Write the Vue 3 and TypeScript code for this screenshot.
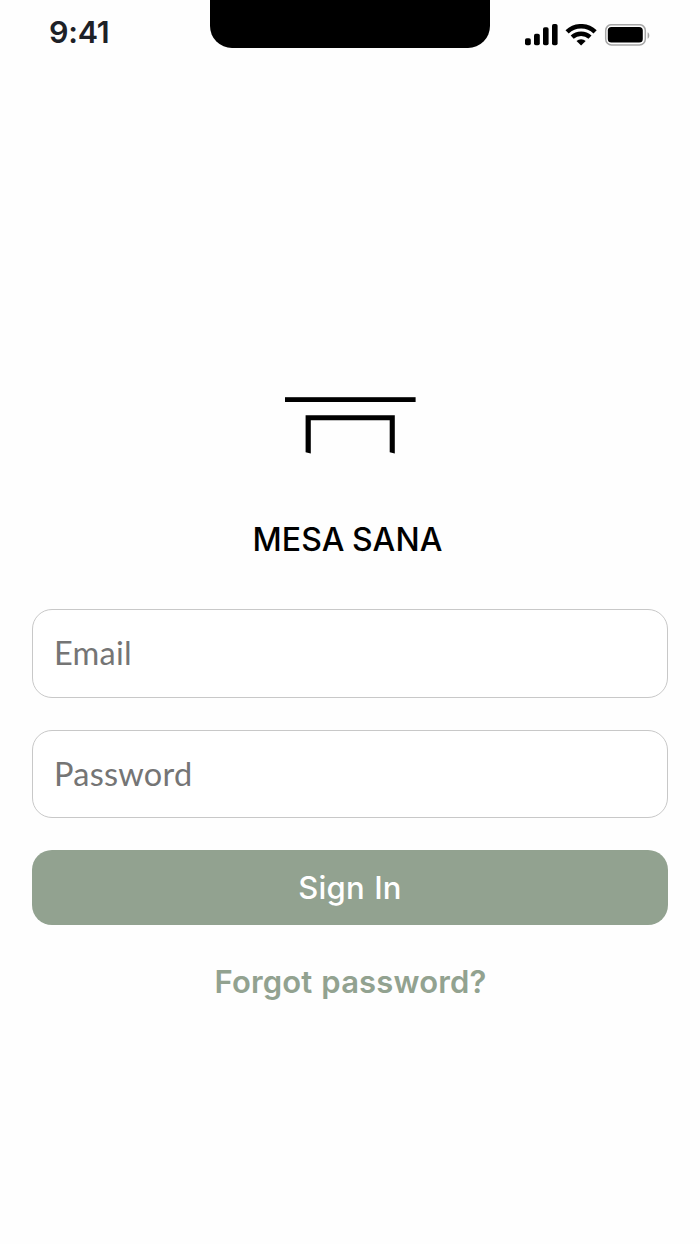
<script setup lang="ts">
import { ref } from 'vue'

const email = ref<string>('')
const password = ref<string>('')
</script>

<template>
  <div class="screen">
    <header class="status-bar">
      <time class="clock">9:41</time>
      <div class="notch"></div>
      <svg class="indicators" width="126" height="24" viewBox="0 0 126 24" aria-hidden="true">
        <rect x="0" y="14.3" width="5.8" height="7" rx="1.8" />
        <rect x="9" y="9.8" width="5.8" height="11.5" rx="1.8" />
        <rect x="18" y="3.3" width="5.6" height="18" rx="1.8" />
        <rect x="27" y="0" width="5.6" height="21.3" rx="1.8" />
        <g fill="none" stroke="#000">
          <path d="M42.1 7.9a20.2 20.2 0 0 1 28 0" stroke-width="4.6" />
          <path d="M47.2 13.2a13 13 0 0 1 17.8 0" stroke-width="4.4" />
        </g>
        <path d="M51.5 17a6.6 6.6 0 0 1 9.2 0L56.1 21.6z" />
        <rect x="80.7" y="0.7" width="39.6" height="20.2" rx="5.8" fill="none" stroke="#a6a6a6" stroke-width="1.5" />
        <rect x="82.8" y="3" width="35" height="15.6" rx="3.6" />
        <path d="M122.6 8.2c2.3 1 2.3 5.5 0 6.5z" fill="#a6a6a6" />
      </svg>
    </header>

    <main class="login">
      <svg class="logo" width="132" height="58" viewBox="0 0 132 58" aria-hidden="true">
        <rect x="1" y="1.2" width="130.6" height="4.8" />
        <path d="M21.6 19.2H110.8V57.5L105.7 56.2V24.2H26.8V57.5L21.6 56.2z" />
      </svg>
      <h1 class="brand">MESA SANA</h1>
      <form class="form" @submit.prevent>
        <input v-model="email" class="field" type="email" placeholder="Email" />
        <input v-model="password" class="field" type="password" placeholder="Password" />
        <button class="submit" type="submit"><span>Sign In</span></button>
      </form>
      <a class="forgot">Forgot password?</a>
    </main>
  </div>
</template>

<style>
body {
  margin: 0;
  background: #fefefe;
}
</style>

<style scoped>
.screen {
  width: 700px;
  height: 1244px;
  overflow: hidden;
  background: #fefefe;
  font-family: Inter, "Liberation Sans", sans-serif;
}

.status-bar {
  display: grid;
  grid-template-columns: 210px 280px 210px;
  grid-template-rows: 48px;
  height: 48px;
}

.clock {
  padding: 13px 0 0 49px;
  font-size: 30.5px;
  line-height: 38px;
  font-weight: 600;
  letter-spacing: -0.3px;
  color: #1d2127;
}

.notch {
  background: #000;
  border-radius: 0 0 22px 22px;
}

.indicators {
  margin: 24px 0 0 35px;
}

.login {
  display: flex;
  flex-direction: column;
  align-items: center;
  padding: 348px 32px 0;
}

.logo {
  display: block;
}

.brand {
  margin: 66px 0 0;
  padding-right: 5px;
  font-size: 32px;
  line-height: 40px;
  font-weight: 550;
  letter-spacing: 0.15px;
  word-spacing: -1.5px;
  color: #000;
}

.form {
  display: flex;
  flex-direction: column;
  width: 100%;
  margin-top: 49px;
}

.field {
  box-sizing: border-box;
  width: 100%;
  height: 88.5px;
  margin: 0 0 32px;
  padding: 0 21px 1px;
  border: 1px solid #c8c8c8;
  border-radius: 20px;
  outline: none;
  background: #fff;
  font-family: Lato, "Liberation Sans", sans-serif;
  font-size: 32.5px;
  letter-spacing: 0.25px;
  color: #222;
}

.field::placeholder {
  color: #757575;
  opacity: 1;
}

.submit {
  height: 75px;
  padding: 0;
  border: 0;
  border-radius: 20px;
  background: #92a290;
  font-family: inherit;
  font-size: 31px;
  font-weight: 550;
  letter-spacing: 0.2px;
  word-spacing: 1px;
  color: #fff;
}

.forgot {
  margin-top: 37px;
  padding-left: 1px;
  font-size: 31px;
  line-height: 40px;
  font-weight: 580;
  letter-spacing: 0.15px;
  word-spacing: 1px;
  color: #92a290;
  white-space: nowrap;
}
</style>
